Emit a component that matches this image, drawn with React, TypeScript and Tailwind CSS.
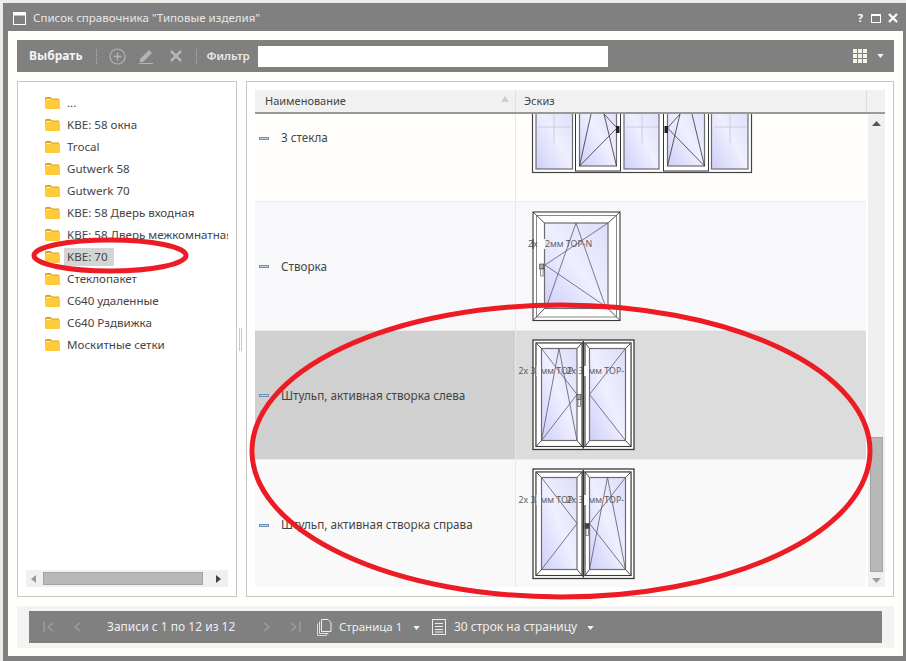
import React from 'react';

const FONT = "font-['Noto_Sans',sans-serif]";

const folders = [
    '...',
    'KBE: 58 окна',
    'Trocal',
    'Gutwerk 58',
    'Gutwerk 70',
    'KBE: 58 Дверь входная',
    'KBE: 58 Дверь межкомнатная',
    'KBE: 70',
    'Стеклопакет',
    'С640 удаленные',
    'С640 Рздвижка',
    'Москитные сетки',
];

const FolderIcon = () => (
    <svg width="15" height="12" viewBox="0 0 15 12" className="shrink-0">
        <path d="M0 1.5 Q0 0 1.5 0 H5.5 L7 1.5 H14 V3 H0 Z" fill="#d9a21f" />
        <path d="M0 3 H1 L3 2.4 H14 Q15 2.4 15 3.5 V10.5 Q15 12 13.5 12 H1.5 Q0 12 0 10.5 Z" fill="#ffcb3d" />
        <rect x="1" y="2" width="5" height="1" fill="#fff3c8" />
    </svg>
);

const Caret = ({ className }: { className: string }) => (
    <svg width="7" height="4" viewBox="0 0 8 5" className={className}>
        <path d="M0 0 H8 L4 5 Z" fill="currentColor" />
    </svg>
);

const Dotted = () => <div className="h-[15px] w-0 border-l border-dotted border-[#b5b5b5]" />;

type Box = { x: number; y: number; w: number; h: number };

// стекло с обводкой
const Glass = ({ x, y, w, h }: Box) => (
    <rect x={x} y={y} width={w} height={h} fill="url(#glass)" stroke="#6d6d6d" strokeWidth="1.2" />
);

// рама с усами по углам
const Frame = ({ outer, inner }: { outer: Box; inner: Box }) => (
    <g>
        <rect x={outer.x} y={outer.y} width={outer.w} height={outer.h} fill="#fff" stroke="#3a3a3a" strokeWidth="1.1" />
        <g stroke="#3a3a3a" strokeWidth="0.9">
            <line x1={outer.x} y1={outer.y} x2={inner.x} y2={inner.y} />
            <line x1={outer.x + outer.w} y1={outer.y} x2={inner.x + inner.w} y2={inner.y} />
            <line x1={outer.x} y1={outer.y + outer.h} x2={inner.x} y2={inner.y + inner.h} />
            <line x1={outer.x + outer.w} y1={outer.y + outer.h} x2={inner.x + inner.w} y2={inner.y + inner.h} />
        </g>
    </g>
);

const Lines = ({ pts, color = '#5a5a6a' }: { pts: number[][]; color?: string }) => (
    <g stroke={color} strokeWidth="0.8" fill="none">
        {pts.map((p, i) => (
            <line key={i} x1={p[0]} y1={p[1]} x2={p[2]} y2={p[3]} />
        ))}
    </g>
);

const Handle = ({ x, y, dark }: { x: number; y: number; dark?: boolean }) => (
    <g>
        <rect x={x - 2} y={y - 4} width="4" height="5" fill={dark ? '#444' : '#aaa'} stroke="#333" strokeWidth="0.6" />
        <rect x={x - 1} y={y + 1} width="2.4" height="7" fill="#fff" stroke="#444" strokeWidth="0.6" />
    </g>
);

const Defs = () => (
    <defs>
        <linearGradient id="glass" x1="0" y1="1" x2="1" y2="0">
            <stop offset="0" stopColor="#cfcffa" />
            <stop offset="0.5" stopColor="#efefff" />
            <stop offset="1" stopColor="#dcdcfa" />
        </linearGradient>
    </defs>
);

const Label = ({ x, y, text }: { x: number; y: number; text: string }) => (
    <text x={x} y={y} fontSize="8.8" fill="#5c5c5c" fontFamily="'Noto Sans', sans-serif">
        {text}
    </text>
);

const SketchRow1 = () => (
    <svg width="250" height="60" viewBox="516 114 250 60" className="block">
        <Defs />
        <rect x="532.5" y="100" width="219" height="72.5" fill="#fff" stroke="#444" strokeWidth="1.2" />
        <Glass x={536} y={100} w={36.5} h={69} />
        <Glass x={624} y={100} w={35} h={69} />
        <Glass x={711.5} y={100} w={36.5} h={69} />
        <g fill="#fff" stroke="#333" strokeWidth="1">
            <rect x="575.5" y="100" width="45" height="71" />
            <rect x="663.5" y="100" width="45" height="71" />
        </g>
        <Glass x={579.5} y={100} w={37} h={66} />
        <Glass x={667.5} y={100} w={37} h={66} />
        <Lines
            color="#c4c4dc"
            pts={[
                [538, 127, 570, 127],
                [554, 112, 554, 143],
                [626, 127, 658, 127],
                [642, 112, 642, 143],
                [714, 127, 746, 127],
                [730, 112, 730, 143],
            ]}
        />
        <Lines
            color="#333"
            pts={[
                [579.5, 166, 617, 128],
                [617, 128, 604, 114],
                [579.5, 166, 591, 114],
                [604, 114, 616.5, 166],
                [667.5, 128, 704.5, 166],
                [667.5, 128, 680, 114],
                [680, 114, 667.5, 166],
                [692, 114, 704.5, 166],
            ]}
        />
        <rect x="616" y="126" width="3.5" height="7" fill="#222" />
        <rect x="664.5" y="126" width="3.5" height="7" fill="#222" />
    </svg>
);

const SketchRow2 = () => (
    <svg width="130" height="128" viewBox="516 202 130 128" className="block">
        <Defs />
        <Frame outer={{ x: 533, y: 212, w: 87, h: 108.5 }} inner={{ x: 544.5, y: 223, w: 63.5, h: 85.5 }} />
        <rect x="536.5" y="215.5" width="80" height="101.5" fill="none" stroke="#555" strokeWidth="0.7" />
        <Glass x={544.5} y={223} w={63.5} h={85.5} />
        <Lines
            pts={[
                [576, 223, 546, 308],
                [576, 223, 606, 308],
                [545, 265, 608, 223],
                [545, 265, 608, 308],
            ]}
        />
        <Label x={528} y={247} text="2x 32мм TOP-N" />
        <rect x="540" y="239" width="5" height="10" fill="#fff" />
        <line x1="533" y1="239" x2="533" y2="249" stroke="#3a3a3a" strokeWidth="1.1" />
        <Handle x={541.7} y={268} />
    </svg>
);

const DoubleSketch = ({ top, handleX, tiltRight }: { top: number; handleX: number; tiltRight: boolean }) => {
    const y0 = top + 9;
    const py = y0 + 8.5;
    const ph = 92;
    const mid = py + 46;
    return (
        <svg width="130" height="128" viewBox={`516 ${top} 130 128`} className="block">
            <Defs />
            <rect x="533" y={y0} width="101" height="109.5" fill="#fff" stroke="#3a3a3a" strokeWidth="1.3" />
            <rect x="536" y={y0 + 3} width="95" height="103.5" fill="none" stroke="#666" strokeWidth="0.7" />
            <Frame outer={{ x: 536, y: y0 + 3, w: 46, h: 103.5 }} inner={{ x: 541.5, y: py, w: 35.5, h: ph }} />
            <Frame outer={{ x: 585, y: y0 + 3, w: 46, h: 103.5 }} inner={{ x: 589.5, y: py, w: 36, h: ph }} />
            <Glass x={541.5} y={py} w={35.5} h={ph} />
            <Glass x={589.5} y={py} w={36} h={ph} />
            <Lines
                pts={[
                    [541.5, py, 577, mid],
                    [541.5, py + ph, 577, mid],
                    [625.5, py, 589.5, mid],
                    [625.5, py + ph, 589.5, mid],
                    ...(tiltRight
                        ? [
                              [607.5, py, 589.5, py + ph],
                              [607.5, py, 625.5, py + ph],
                          ]
                        : [
                              [559, py, 541.5, py + ph],
                              [559, py, 577, py + ph],
                          ]),
                ]}
            />
            <Label x={518.5} y={top + 43} text="2x 32мм TOP" />
            <Label x={566.5} y={top + 43} text="2x 32мм TOP-" />
            <rect x="536.5" y={top + 35} width="4.5" height="10" fill="#fff" />
            <rect x="583.5" y={top + 35} width="5.5" height="10" fill="#fff" />
            <rect x="582.5" y={y0 + 1} width="1.6" height="107.5" fill="#333" />
            <Handle x={handleX} y={mid + 4} dark={tiltRight} />
        </svg>
    );
};

const rows = [
    { name: '3 стекла', h: 'h-[88px]', pad: 'pb-[39px]', left: 'bg-[#fffefa]', right: 'bg-[#fffefa]', sketch: <SketchRow1 /> },
    { name: 'Створка', h: 'h-[129px]', pad: 'pt-[1px]', left: 'bg-[#f8f8fa]', right: 'bg-[#f8f8fa]', sketch: <SketchRow2 /> },
    {
        name: 'Штульп, активная створка слева',
        h: 'h-[129px]',
        pad: 'pt-[1px]',
        left: 'bg-[#d0d0d0]',
        right: 'bg-[#dcdcdc]',
        sketch: <DoubleSketch top={331} handleX={579} tiltRight={false} />,
    },
    {
        name: 'Штульп, активная створка справа',
        h: 'h-[127px]',
        pad: 'pt-[3px]',
        left: 'bg-[#f9f9f9]',
        right: 'bg-[#f9f9f9]',
        sketch: <DoubleSketch top={460} handleX={587} tiltRight={true} />,
    },
];

export default function App() {
    return (
        <div className={`relative h-[661px] w-[906px] overflow-hidden bg-[#ececec] pl-[3px] pt-[3px] text-[12px] ${FONT}`}>
            <div className="flex h-[658px] w-[903px] flex-col bg-[#808080] pb-[5px] pl-[5px] pr-[3px]">
                {/* заголовок */}
                <div className="flex h-[28px] shrink-0 items-center pr-[5px] text-[#e6e6e6]">
                    <svg width="13" height="13" viewBox="0 0 13 13" className="ml-[5px] mt-[2px] shrink-0">
                        <rect x="0.5" y="0.5" width="12" height="12" fill="none" stroke="#fff" />
                        <rect x="0" y="0" width="13" height="3.5" fill="#fff" />
                    </svg>
                    <span className="ml-[7px] mt-[1px] text-[11.55px]">Список справочника "Типовые изделия"</span>
                    <span className="ml-auto mt-[2px] text-[11px] font-bold text-white">?</span>
                    <svg width="10" height="9" viewBox="0 0 10 9" className="ml-[8px] mt-[3px]">
                        <rect x="0.5" y="1" width="9" height="7.5" fill="none" stroke="#fff" />
                        <rect x="0" y="0" width="10" height="2" fill="#fff" />
                    </svg>
                    <svg width="10" height="10" viewBox="0 0 10 10" className="ml-[7px] mt-[2px]">
                        <path d="M1 1 L9 9 M9 1 L1 9" stroke="#fff" strokeWidth="2.2" />
                    </svg>
                </div>

                <div className="flex min-h-0 flex-1 flex-col gap-[9px] bg-[#fffefa] p-[9px]">
                    {/* тулбар */}
                    <div className="flex h-[32px] shrink-0 items-center bg-[#808080] pl-[12px] pr-[10px]">
                        <span className="font-bold text-[#f4f4f4]">Выбрать</span>
                        <div className="ml-[13px]"><Dotted /></div>
                        <svg width="17" height="17" viewBox="0 0 17 17" className="ml-[12px]">
                            <circle cx="8.5" cy="8.5" r="7.5" fill="none" stroke="#b4b4b4" strokeWidth="1.2" />
                            <path d="M8.5 4.5 V12.5 M4.5 8.5 H12.5" stroke="#b4b4b4" strokeWidth="1.3" />
                        </svg>
                        <svg width="15" height="16" viewBox="0 0 15 16" className="ml-[13px]">
                            <path d="M1 11 L10 2 L13 5 L4 14 L1 14 Z" fill="#b4b4b4" />
                            <rect x="0" y="15" width="14" height="1" fill="#b4b4b4" />
                        </svg>
                        <svg width="12" height="12" viewBox="0 0 12 12" className="ml-[16px]">
                            <path d="M1 1 L11 11 M11 1 L1 11" stroke="#b4b4b4" strokeWidth="2.6" />
                        </svg>
                        <div className="ml-[14px]"><Dotted /></div>
                        <span className="ml-[10px] w-[41px] whitespace-nowrap text-[11.5px] font-semibold text-[#e8e8e8]">Фильтр</span>
                        <div className="ml-[10px] h-[21px] w-[350px] bg-white" />
                        <svg width="14" height="14" viewBox="0 0 14 14" className="ml-auto" fill="#f6f4e8">
                            <rect x="0" y="0" width="4" height="4" />
                            <rect x="5" y="0" width="4" height="4" />
                            <rect x="10" y="0" width="4" height="4" />
                            <rect x="0" y="5" width="4" height="4" />
                            <rect x="5" y="5" width="4" height="4" />
                            <rect x="10" y="5" width="4" height="4" />
                            <rect x="0" y="10" width="4" height="4" />
                            <rect x="5" y="10" width="4" height="4" />
                            <rect x="10" y="10" width="4" height="4" />
                        </svg>
                        <Caret className="ml-[10px] text-[#f6f4e8]" />
                    </div>

                    <div className="flex h-[516px] shrink-0 gap-[9px]">
                        {/* дерево */}
                        <div className="relative flex w-[220px] shrink-0 flex-col border border-[#c6c6c6] bg-white">
                            <div className="min-h-0 flex-1 pl-[27px] pt-[10px] text-[11.6px] text-[#444]">
                                <div className="w-[183px] overflow-hidden">
                                    {folders.map((f) => (
                                        <div key={f} className="flex h-[22px] items-center gap-[7px] whitespace-nowrap">
                                            <FolderIcon />
                                            <span className={f === 'KBE: 70' ? '-ml-[3px] bg-[#d4d4d4] pl-[3px] pr-[6px]' : ''}>{f}</span>
                                        </div>
                                    ))}
                                </div>
                            </div>
                            <div className="mx-[8px] mb-[9px] flex h-[17px] shrink-0 items-center bg-[#f0f0f0] px-[5px]">
                                <svg width="5" height="8" viewBox="0 0 5 8"><path d="M5 0 V8 L0 4 Z" fill="#999" /></svg>
                                <div className="ml-[7px] h-[13px] w-[160px] border border-[#a4a4a4] bg-[#b8b8b8]" />
                                <svg width="5" height="8" viewBox="0 0 5 8" className="ml-[13px]"><path d="M0 0 V8 L5 4 Z" fill="#444" /></svg>
                            </div>
                            <div className="absolute -right-[6px] top-[246px] h-[23px] w-[3px] border-x border-[#c8c8c8]" />
                        </div>

                        {/* таблица */}
                        <div className="flex min-w-0 flex-1 flex-col border border-[#c6c6c6] bg-white px-[8px] pb-[9px] pt-[8px]">
                            <div className="flex h-[24px] shrink-0 items-center border-b-2 border-[#999] bg-[#f1f1f1] text-[11px] text-[#444]">
                                <div className="relative flex h-full w-[260px] items-center pl-[10px]">
                                    Наименование
                                    <svg width="8" height="6" viewBox="0 0 8 6" className="absolute right-[6px] top-[6px]"><path d="M0 6 H8 L4 0 Z" fill="#cfcfcf" /></svg>
                                </div>
                                <div className="flex h-full w-[351px] items-center border-l border-[#e0e0e0] pl-[8px]">Эскиз</div>
                                <div className="h-full flex-1 border-l border-[#dcdcdc]" />
                            </div>
                            <div className="flex min-h-0 flex-1">
                                <div className="w-[611px] shrink-0">
                                    {rows.map((r) => (
                                        <div key={r.name} className={`flex overflow-hidden border-b border-[#ececec] last:border-b-0 ${r.h}`}>
                                            <div className={`flex w-[260px] shrink-0 items-center pl-[4px] text-[11.7px] text-[#444] ${r.left} ${r.pad}`}>
                                                <svg width="10" height="3" viewBox="0 0 10 3" className="shrink-0">
                                                    <rect width="10" height="3" fill="#6f93b8" />
                                                    <rect x="1" y="1" width="8" height="1" fill="#bcd2e6" />
                                                </svg>
                                                <span className="ml-[12px] whitespace-nowrap">{r.name}</span>
                                            </div>
                                            <div className={`flex-1 border-l border-[#e8e8e8] ${r.right}`}>{r.sketch}</div>
                                        </div>
                                    ))}
                                </div>
                                <div className="ml-[2px] flex flex-1 flex-col items-center bg-[#f0f0f0]">
                                    <svg width="9" height="5" viewBox="0 0 9 5" className="mt-[7px] shrink-0"><path d="M0 5 H9 L4.5 0 Z" fill="#555" /></svg>
                                    <div className="mt-[311px] h-[135px] w-[13px] shrink-0 border border-[#a4a4a4] bg-[#b8b8b8]" />
                                    <svg width="9" height="5" viewBox="0 0 9 5" className="mt-[6px] shrink-0"><path d="M0 0 H9 L4.5 5 Z" fill="#a0a0a0" /></svg>
                                </div>
                            </div>
                        </div>
                    </div>

                    {/* пейджер */}
                    <div className="h-[42px] shrink-0 bg-[#f3f3f3] px-[12px] py-[5px]">
                        <div className="flex h-[32px] items-center bg-[#808080] pl-[14px] text-[#efefef]">
                            <svg width="11" height="10" viewBox="0 0 11 10" fill="none" stroke="#9c9c9c" strokeWidth="1.6">
                                <path d="M1 0 V10 M10 1 L5 5 L10 9" />
                            </svg>
                            <svg width="7" height="10" viewBox="0 0 7 10" fill="none" stroke="#9c9c9c" strokeWidth="1.6" className="ml-[20px]">
                                <path d="M6 1 L1 5 L6 9" />
                            </svg>
                            <span className="ml-[26px] w-[130px] whitespace-nowrap">Записи с 1 по 12 из 12</span>
                            <svg width="7" height="10" viewBox="0 0 7 10" fill="none" stroke="#9c9c9c" strokeWidth="1.6" className="ml-[26px]">
                                <path d="M1 1 L6 5 L1 9" />
                            </svg>
                            <svg width="11" height="10" viewBox="0 0 11 10" fill="none" stroke="#9c9c9c" strokeWidth="1.6" className="ml-[20px]">
                                <path d="M1 1 L6 5 L1 9 M10 0 V10" />
                            </svg>
                            <svg width="15" height="17" viewBox="0 0 15 17" fill="none" className="ml-[16px]">
                                <path d="M0.5 4.5 V16.5 H9.5 V14" stroke="#c8dcea" />
                                <path d="M2.5 2.5 V14.5 H11.5" stroke="#d8e4ee" />
                                <path d="M4.5 0.5 H11 L14 3.5 V12.5 H4.5 Z" stroke="#f0f0f0" />
                            </svg>
                            <span className="ml-[7px] w-[63px] whitespace-nowrap text-[11.5px]">Страница 1</span>
                            <Caret className="ml-[11px] mt-[2px] text-[#f4f4f4]" />
                            <svg width="14" height="16" viewBox="0 0 14 16" fill="none" stroke="#eeeeee" className="ml-[12px]">
                                <rect x="0.5" y="0.5" width="13" height="15" />
                                <path d="M3 4.5 H11 M3 7.5 H11 M3 10.5 H11 M3 13 H11" />
                            </svg>
                            <span className="ml-[8px]">30 строк на страницу</span>
                            <Caret className="ml-[10px] mt-[2px] text-[#f4f4f4]" />
                        </div>
                    </div>
                </div>
            </div>

            {/* красные овалы поверх окна */}
            <svg width="906" height="661" viewBox="0 0 906 661" className="pointer-events-none absolute left-0 top-0" fill="none" stroke="#ed1c24">
                <ellipse cx="110" cy="255.5" rx="76" ry="15.5" strokeWidth="5" />
                <ellipse cx="561" cy="451" rx="309" ry="146" strokeWidth="5" />
            </svg>
        </div>
    );
}
